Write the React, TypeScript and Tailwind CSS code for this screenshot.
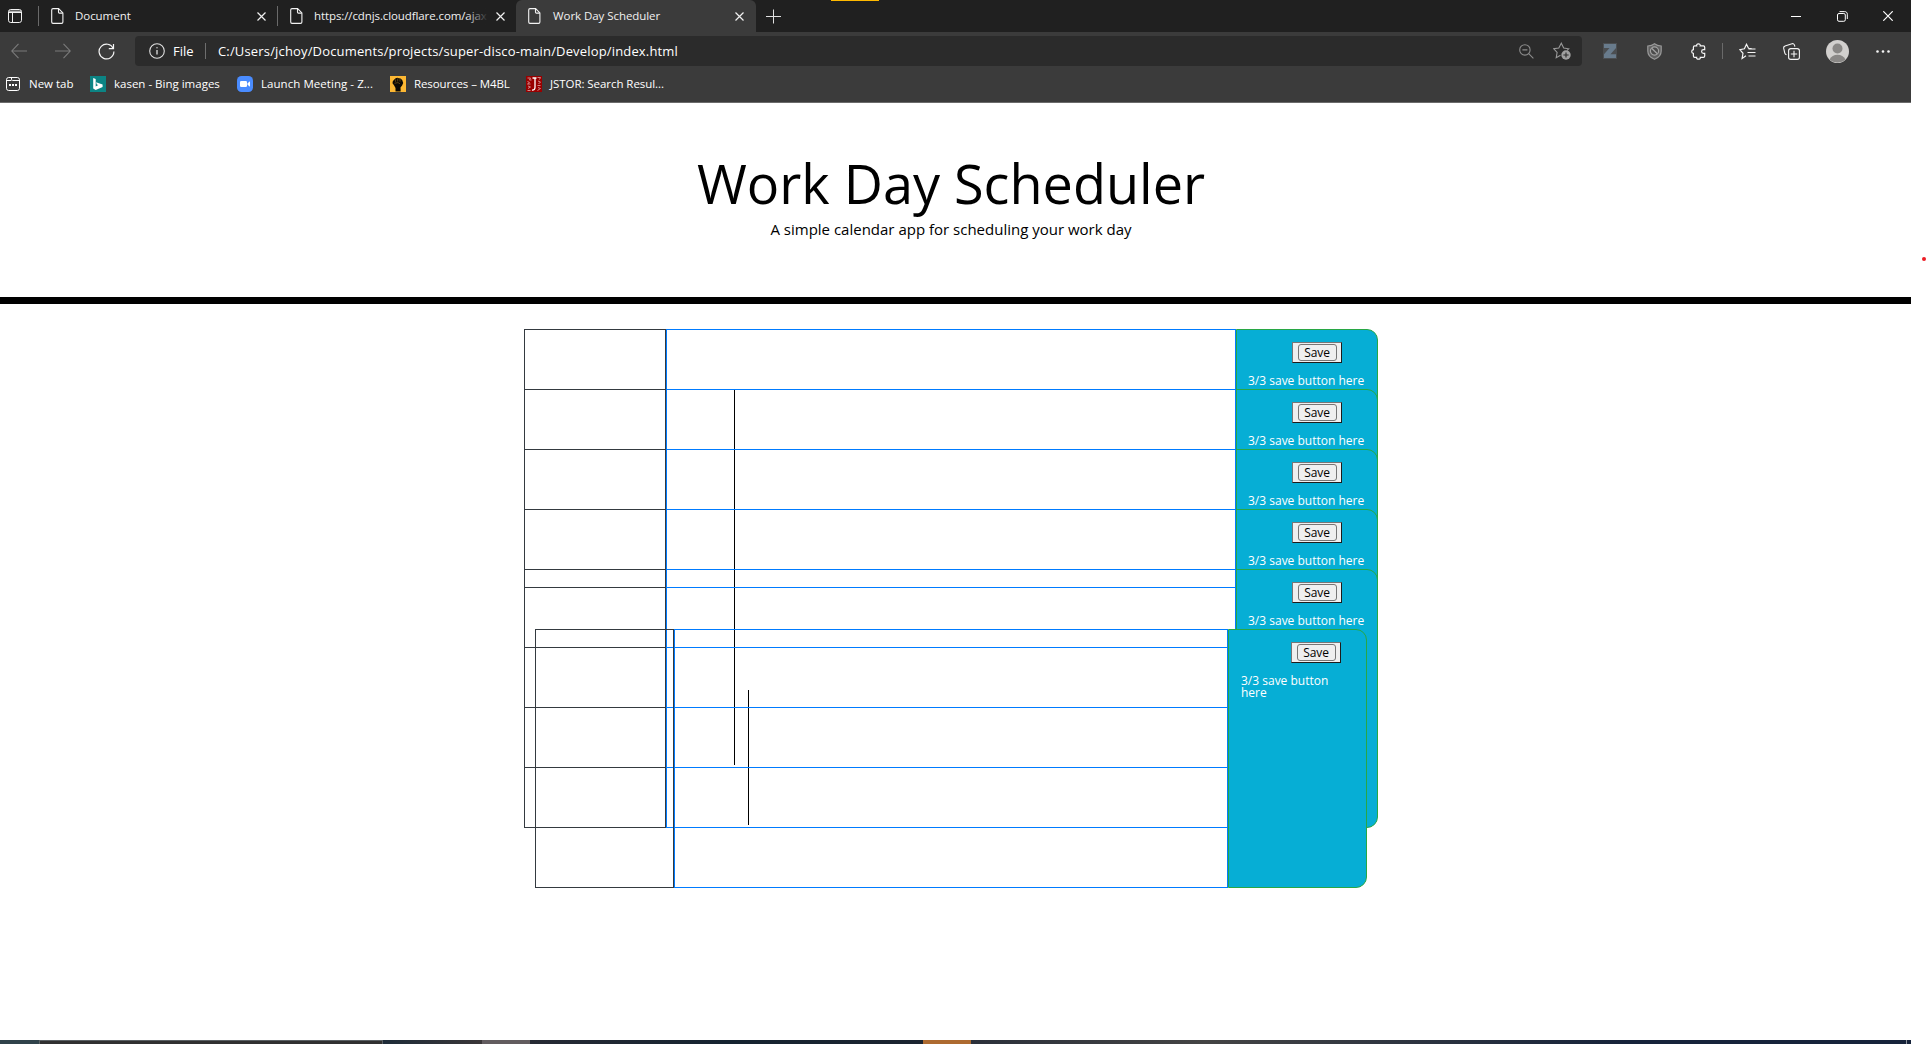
import type { ReactNode } from "react";

const rows = [0, 1, 2, 3, 4];

function PageIcon({ className }: { className: string }) {
  return (
    <svg className={`h-4 w-[13px] shrink-0 ${className}`} viewBox="0 0 13 16" fill="none" stroke="#f2f2f2" strokeWidth="1.1">
      <path d="M2 .6h5.6l4.3 4.3v9.2c0 .8-.5 1.3-1.3 1.3H2C1.200 15.400.7 14.900.7 14.100V1.900C.7 1.100 1.200.6 2 .6Z" />
      <path d="M7.500.8v3.400c0 .6.300.9.9.9h3.400" />
    </svg>
  );
}

function CloseIcon({ className }: { className: string }) {
  return (
    <svg className={`h-[9px] w-[9px] shrink-0 ${className}`} viewBox="0 0 9 9" stroke="#f0f0f0" strokeWidth="1.2">
      <path d="M.5.5l8 8M8.500.5l-8 8" />
    </svg>
  );
}

function TabStrip() {
  return (
    <div className="flex h-8 items-center bg-[#202020] text-[11.5px] text-[#f0f0f0]">
      <svg className="ml-2 h-[14px] w-[14px] shrink-0" viewBox="0 0 14 14" fill="none" stroke="#f2f2f2">
        <rect x=".5" y=".5" width="13" height="13" rx="2.200" />
        <path d="M1 2.200h12M1 3.500h12M4.500 4v9.500" />
      </svg>
      <div className="ml-4 h-5 w-px bg-[#6a6a6a]" />
      <PageIcon className="ml-3" />
      <span className="ml-[11px] w-[182px] whitespace-nowrap tracking-[-0.05px]">Document</span>
      <CloseIcon className="mt-px" />
      <div className="ml-[11px] h-5 w-px bg-[#6a6a6a]" />
      <PageIcon className="ml-3" />
      <span className="relative ml-[11px] w-[178px] whitespace-nowrap tracking-[-0.100px]">
        https://cdnjs.cloudflare.com/ajax
        <span className="absolute inset-y-0 right-1 w-[22px] bg-linear-to-r from-transparent to-[#202020]" />
      </span>
      <CloseIcon className="mt-px ml-1" />
      <div className="ml-[11px] flex h-8 w-[240px] items-center rounded-t-[6px] bg-[#3b3b3b]">
        <PageIcon className="ml-3" />
        <span className="ml-3 w-[182px] whitespace-nowrap tracking-[-0.06px]">Work Day Scheduler</span>
        <CloseIcon className="mt-px" />
      </div>
      <svg className="ml-[10px] h-[15px] w-[15px] shrink-0" viewBox="0 0 15 15" stroke="#e0e0e0">
        <path d="M0 7.500h15M7.500.5v14" />
      </svg>
      <div className="ml-[50px] h-px w-12 self-start bg-[#ffb900]" />
      <svg className="ml-auto h-[11px] w-[10px] shrink-0" viewBox="0 0 10 11" stroke="#fff">
        <path d="M0 5.500h10" />
      </svg>
      <svg className="ml-9 h-[11px] w-[11px] shrink-0" viewBox="0 0 11 11" fill="none" stroke="#fff">
        <rect x=".5" y="2.500" width="7.800" height="7.800" rx="1.500" />
        <path d="M2.500.6h5.200c1.600 0 2.600 1 2.600 2.600v4.800" />
      </svg>
      <svg className="mr-[18px] ml-[35px] h-[10px] w-[10px] shrink-0" viewBox="0 0 10 10" stroke="#fff" strokeWidth="1.200">
        <path d="M.3.3l9.400 9.400M9.700.3L.3 9.700" />
      </svg>
    </div>
  );
}

function AddressRow() {
  return (
    <div className="flex h-[38px] items-center text-[13px] text-white">
      <svg className="ml-[11px] h-4 w-4 shrink-0" viewBox="0 0 16 16" fill="none" stroke="#7b7b7b" strokeWidth="1.100">
        <path d="M7.500.8L.8 8l6.700 7.200M.8 8H16" />
      </svg>
      <svg className="ml-7 h-4 w-4 shrink-0" viewBox="0 0 16 16" fill="none" stroke="#7b7b7b" strokeWidth="1.100">
        <path d="M8.500.8L15.200 8l-6.700 7.200M15.200 8H0" />
      </svg>
      <svg className="ml-[27px] h-[17px] w-[17px] shrink-0" viewBox="0 0 17 17" fill="none" stroke="#f5f5f5" strokeWidth="1.200">
        <path d="M15.300 5.600A7.400 7.400 0 1 0 15.900 8.600" />
        <path d="M15.500 1v4.700h-4.700" />
      </svg>
      <div className="ml-5 flex h-[30px] w-[1447px] items-center rounded-[4px] bg-[#2b2b2b]">
        <svg className="ml-[14px] h-4 w-4 shrink-0" viewBox="0 0 16 16" fill="none" stroke="#e0e0e0" strokeWidth="1.100">
          <circle cx="8" cy="8" r="7.300" />
          <path d="M8 7v4.600" strokeWidth="1.300" />
          <circle cx="8" cy="4.700" r=".7" fill="#e0e0e0" stroke="none" />
        </svg>
        <span className="ml-2 w-8 pt-px">File</span>
        <div className="h-4 w-px bg-[#6e6e6e]" />
        <span className="ml-3 pt-px whitespace-nowrap tracking-[0.160px]">
          C:/Users/jchoy/Documents/projects/super-disco-main/Develop/index.html
        </span>
        <svg className="ml-auto h-[15px] w-[15px] shrink-0" viewBox="0 0 15 15" fill="none" stroke="#8c8c8c" strokeWidth="1.100">
          <circle cx="5.900" cy="5.900" r="5.200" />
          <path d="M3.400 5.900h5M9.700 9.700l4.700 4.700" />
        </svg>
        <svg className="mr-[11px] ml-[19px] h-[18px] w-[18px] shrink-0" viewBox="0 0 18 18" fill="none" stroke="#9a9a9a" strokeWidth="1.100">
          <path d="M7.500 13.300l-4.300 2.500.9-5.300L.8 6.800l5-.8L8.300 1.200l2.400 4.800 5 .8-1.600 1.600" />
          <circle cx="13" cy="13" r="4.700" fill="#a0a0a0" stroke="none" />
          <path d="M13 10.400v5.200M10.400 13h5.200" stroke="#2b2b2b" />
        </svg>
      </div>
      <svg className="ml-[21px] h-4 w-[14px] shrink-0" viewBox="0 0 14 16">
        <path d="M0 0h14v16H0Z" fill="#4b4e51" />
        <path d="M1 1h12v4L7.500 11.300H13V15H1v-3.700L6.500 5H1Z" fill="#687b8c" />
      </svg>
      <svg className="ml-[30px] h-[17px] w-[15px] shrink-0" viewBox="0 0 15 17" fill="none">
        <path d="M7.500.7c2 1.600 4 2.200 6.700 2.300v5c0 4-2.600 6.700-6.700 8.300C3.400 14.700.8 12 .8 8V3C3.500 2.900 5.500 2.300 7.500.7Z" fill="#606060" stroke="#999" strokeWidth="1.200" />
        <circle cx="7.500" cy="8" r="4.100" fill="#4a4a4a" stroke="#a2a2a2" strokeWidth="1.200" />
        <path d="M4.700 5.200l5.600 5.600" stroke="#a2a2a2" strokeWidth="1.300" />
      </svg>
      <svg className="ml-[29px] h-[17px] w-[15px] shrink-0" viewBox="0 0 15 17" fill="none" stroke="#f5f5f5" strokeWidth="1.200">
        <path d="M3.700 2.900h2C5.300 1.600 6.200.8 7.400.8s2.200.8 1.800 2.100h3.200c.8 0 1.300.5 1.300 1.300v2.500h-1.200c-1.200 0-1.900.8-1.900 1.800s.7 1.800 1.900 1.800h1.200v2.700c0 .8-.5 1.300-1.300 1.300H9.300c.3 1.200-.6 1.900-1.800 1.900s-2.200-.7-1.900-1.900H3.700c-.8 0-1.300-.5-1.300-1.300v-2.600c-1.200-.2-1.700-.9-1.700-1.900s.5-1.600 1.700-1.800V4.200c0-.8.500-1.300 1.300-1.300Z" />
      </svg>
      <div className="ml-4 h-4 w-px bg-[#6a6a6a]" />
      <svg className="ml-4 h-[17px] w-[17px] shrink-0" viewBox="0 0 17 17" fill="none" stroke="#f5f5f5" strokeWidth="1.200">
        <path d="M7 12.800l-3.900 2.700.9-5.200L.8 6.600l4.600-.8L7.500 1.300l2 4 3.400.5M9.500 6h7M8.500 9.500h8M9.500 13h7" />
      </svg>
      <svg className="ml-[27px] h-[17px] w-[17px] shrink-0" viewBox="0 0 17 17" fill="none" stroke="#f5f5f5" strokeWidth="1.100">
        <path d="M3.500 11.800C2.300 11.500 2 11 1.800 10.200L.7 5.400C.5 4.300 1 3.400 2 3.100L9 .8c1.200-.4 2.100.2 2.500 1.400l.4 1.500" />
        <rect x="5.600" y="5.600" width="10.800" height="10.800" rx="2.200" />
        <path d="M11 7.800v6.400M7.800 11h6.400" />
      </svg>
      <svg className="ml-[26px] h-[23px] w-[23px] shrink-0" viewBox="0 0 23 23">
        <circle cx="11.500" cy="11.500" r="11.500" fill="#d2d0ce" />
        <circle cx="11.500" cy="8.500" r="5" fill="#8a8886" />
        <path d="M3.500 19.500c1.500-3.200 4.500-4.800 8-4.800s6.500 1.600 8 4.800c-2 2-5 3-8 3s-6-1-8-3Z" fill="#8a8886" />
      </svg>
      <svg className="ml-[27px] h-[3px] w-[14px] shrink-0" viewBox="0 0 14 3" fill="#f5f5f5">
        <circle cx="1.500" cy="1.500" r="1.300" />
        <circle cx="7" cy="1.500" r="1.300" />
        <circle cx="12.500" cy="1.500" r="1.300" />
      </svg>
    </div>
  );
}

function Bookmark({ icon, className, label }: { icon: ReactNode; className: string; label: string }) {
  return (
    <div className={`flex shrink-0 items-center gap-2 whitespace-nowrap ${className}`}>
      {icon}
      <span>{label}</span>
    </div>
  );
}

function BookmarksBar() {
  return (
    <div className="flex h-7 items-center pl-[5px] text-[11.5px] text-white">
      <Bookmark
        className="w-[85px]"
        label="New tab"
        icon={
          <svg className="h-4 w-4" viewBox="0 0 16 16" fill="none" stroke="#fff">
            <rect x="1.500" y="1.500" width="13" height="13" rx="2.200" />
            <path d="M1.500 4.500h5M6.500 1.500v1.500c0 1 .6 1.500 1.500 1.500h6.500" />
            <path d="M4 9h2M7 9h2M10 9h2" strokeWidth="2" />
          </svg>
        }
      />
      <Bookmark
        className="w-[147px]"
        label="kasen - Bing images"
        icon={
          <svg className="h-4 w-4" viewBox="0 0 16 16">
            <path fill="#0c8484" d="M0 0h16v16H0Z" />
            <path fill="#fff" d="M3.200 2l2.500.9v7.700l2.600-1.500-1.400-.6-.9-2.200 6.600 2.300v2.300L5.700 14l-2.500-1.500Z" />
          </svg>
        }
      />
      <Bookmark
        className="w-[153px] tracking-[0.050px]"
        label="Launch Meeting - Z..."
        icon={
          <svg className="h-4 w-4" viewBox="0 0 16 16">
            <rect width="16" height="16" rx="4.500" fill="#4a8cff" />
            <rect x="3" y="5" width="7" height="6" rx="1.300" fill="#fff" />
            <path fill="#fff" d="M10.500 7.200L13 5.300v5.400l-2.500-1.900Z" />
          </svg>
        }
      />
      <Bookmark
        className="w-[136px] tracking-[-0.100px]"
        label="Resources – M4BL"
        icon={
          <svg className="h-4 w-4" viewBox="0 0 16 16">
            <path fill="#fdb833" d="M0 0h16v16H0Z" />
            <path fill="#0d0a05" d="M2.800 5.200L4.300 3.500l1.400-1.300 1.600-.4 1.500.5 1.700.3 1.700 1.400 1 3-1.100 2.600-1.600 2 .2 3.900H5.500V12L4 9.300 2.500 7.300Z" />
            <path stroke="#a87620" strokeWidth=".5" fill="none" d="M5.300 3.500l.3 2.300M7.700 2.500v3M10 3v2.600M4.500 7.300l3.500-.7 2 1.200" />
          </svg>
        }
      />
      <Bookmark
        className="tracking-[-0.060px]"
        label="JSTOR: Search Resul..."
        icon={
          <svg className="h-4 w-4" viewBox="0 0 16 16" fill="none">
            <path fill="#990000" d="M0 0h16v16H0Z" />
            <path stroke="#d08a8a" d="M1.500 2h3l-1 2h2M1.500 5.500l2 1-2 1.500h3M2 10l2.500 1L2 12.500M1.500 14.500h3M11.500 1.500h3l-1 2M12 5l2.500 1-2 2M11.500 9.500h3M12 11.500l2.500 1-3 2" />
            <path stroke="#fff" strokeWidth="1.300" d="M6.500 2h4M9 2v9.300c0 2-1 2.900-3 2.700" />
          </svg>
        }
      />
    </div>
  );
}

function SavePanel() {
  return (
    <div className="flex h-[21px] w-[50px] items-center justify-center border border-t-[#767676] border-r-[#1c1c1c] border-b-[#1c1c1c] border-l-[#767676] bg-[#efefef]">
      <button className="h-[17px] w-[39px] rounded-[3px] border border-[#767676] bg-[#efefef] text-center text-[12px] leading-[14px] tracking-[-0.100px] text-black">
        Save
      </button>
    </div>
  );
}

function TimeBlock() {
  return (
    <div className="h-[60px] shrink-0">
      <div className="flex h-[259px]">
        <div className="w-[142px] border border-[#343a40]" />
        <div className="w-[570px] border border-[#007bff]" />
        <div className="w-[142px] rounded-r-[11px] border border-[#28a745] bg-[#06aed5] pt-3 text-[12px] leading-3 text-white">
          <div className="pl-[55px]">
            <SavePanel />
          </div>
          <p className="mt-3 pl-[11px] whitespace-nowrap">3/3 save button here</p>
        </div>
      </div>
    </div>
  );
}

function InnerTimeBlock() {
  return (
    <div className="ml-[11px] flex h-[259px] w-[832px] shrink-0">
      <div className="w-[139px] border border-[#343a40]" />
      <div className="w-[554px] border border-[#007bff]" />
      <div className="w-[139px] rounded-r-[11px] border border-[#28a745] bg-[#06aed5] pt-3 text-[12px] leading-3 text-white">
        <div className="pl-[62px]">
          <SavePanel />
        </div>
        <p className="mt-3 w-[110px] pl-3">3/3 save button here</p>
      </div>
    </div>
  );
}

export default function App() {
  return (
    <div className="flex h-[1044px] w-[1927px] flex-col overflow-hidden bg-white font-['Open_Sans',sans-serif]">
      <div className="flex flex-1">
        <div className="w-[1911px] shrink-0">
          <div className="h-[103px] border-b border-[#6b6b6b] bg-[#3b3b3b]">
            <TabStrip />
            <AddressRow />
            <BookmarksBar />
          </div>
          <header className="flex h-[201px] flex-col items-center border-b-[7px] border-black pr-[9px] text-black">
            <h1 className="mt-[47px] text-[54px] leading-[66px] font-normal whitespace-nowrap">Work Day Scheduler</h1>
            <p className="mt-px text-[15px] leading-6">A simple calendar app for scheduling your work day</p>
          </header>
          <main className="relative mt-[25px] ml-[524px] flex w-[854px] flex-col">
            <div className="absolute top-[61px] left-[210px] h-[375px] w-px bg-black" />
            <div className="absolute top-[361px] left-[224px] h-[135px] w-px bg-black" />
            <div className="relative flex flex-col">
              {rows.map((r) => (
                <TimeBlock key={r} />
              ))}
              <InnerTimeBlock />
            </div>
          </main>
        </div>
        <div className="w-4 pt-[257px] pl-[11px]">
          <div className="h-1 w-1 rounded-full bg-[#ed1c24]" />
        </div>
      </div>
      <footer className="flex h-1 w-[1911px] shrink-0">
        <div className="w-[39px] bg-[#30424a]" />
        <div className="w-[344px] border border-b-0 border-[#5a6063] bg-[#303030]" />
        <div className="w-[99px] bg-linear-to-r from-[#1d2b38] to-[#3a3638]" />
        <div className="w-12 bg-[#625c5f]" />
        <div className="w-[393px] bg-linear-to-r from-[#262a34] via-[#152330] to-[#1b2430]" />
        <div className="w-12 bg-[#ad6a30]" />
        <div className="flex-1 bg-linear-to-r from-[#2b303a] via-[#444444] via-25% to-[#16233a] to-70%" />
        <div className="w-px bg-[#8c929c]" />
        <div className="w-1 bg-[#16233a]" />
      </footer>
    </div>
  );
}
